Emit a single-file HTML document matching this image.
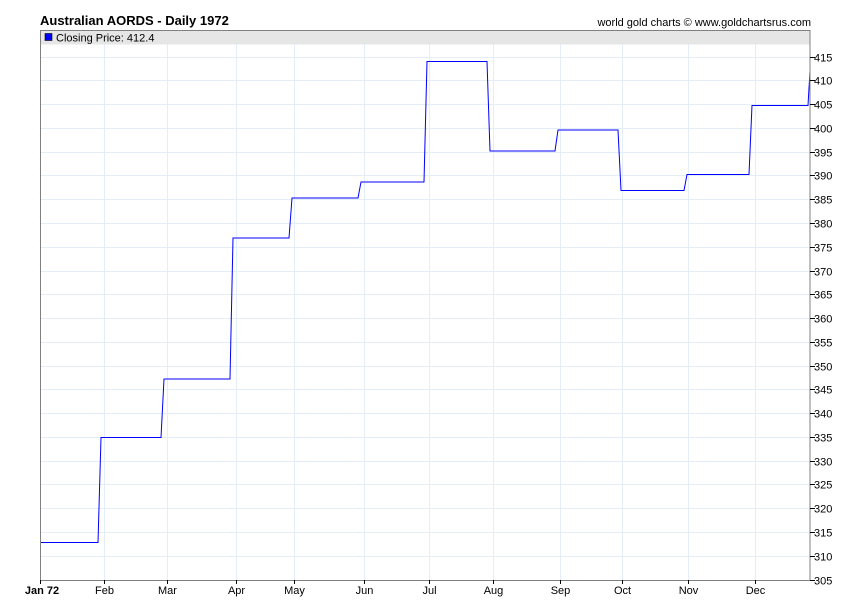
<!DOCTYPE html>
<html><head><meta charset="utf-8"><style>
html,body{margin:0;padding:0;background:#fff;}
svg{display:block;font-family:"Liberation Sans",Arial,sans-serif;}
</style></head><body>
<svg width="850" height="616" xmlns="http://www.w3.org/2000/svg">
<rect width="850" height="616" fill="#fff"/>
<text x="40" y="25" font-size="13" font-weight="bold" fill="#000">Australian AORDS - Daily 1972</text>
<text x="811" y="26" font-size="11" text-anchor="end" fill="#000">world gold charts © www.goldchartsrus.com</text>
<rect x="40.5" y="30.5" width="769.5" height="14" fill="#e6e6e6"/>
<g stroke="#e3eef8" stroke-width="1">
<line x1="40" x2="810" y1="556.5" y2="556.5"/><line x1="40" x2="810" y1="532.5" y2="532.5"/>
<line x1="40" x2="810" y1="508.5" y2="508.5"/><line x1="40" x2="810" y1="484.5" y2="484.5"/>
<line x1="40" x2="810" y1="461.5" y2="461.5"/><line x1="40" x2="810" y1="437.5" y2="437.5"/>
<line x1="40" x2="810" y1="413.5" y2="413.5"/><line x1="40" x2="810" y1="389.5" y2="389.5"/>
<line x1="40" x2="810" y1="366.5" y2="366.5"/><line x1="40" x2="810" y1="342.5" y2="342.5"/>
<line x1="40" x2="810" y1="318.5" y2="318.5"/><line x1="40" x2="810" y1="294.5" y2="294.5"/>
<line x1="40" x2="810" y1="271.5" y2="271.5"/><line x1="40" x2="810" y1="247.5" y2="247.5"/>
<line x1="40" x2="810" y1="223.5" y2="223.5"/><line x1="40" x2="810" y1="199.5" y2="199.5"/>
<line x1="40" x2="810" y1="175.5" y2="175.5"/><line x1="40" x2="810" y1="152.5" y2="152.5"/>
<line x1="40" x2="810" y1="128.5" y2="128.5"/><line x1="40" x2="810" y1="104.5" y2="104.5"/>
<line x1="40" x2="810" y1="80.5" y2="80.5"/><line x1="40" x2="810" y1="57.5" y2="57.5"/>
<line x1="104.5" x2="104.5" y1="30" y2="580"/><line x1="167.5" x2="167.5" y1="30" y2="580"/>
<line x1="236.5" x2="236.5" y1="30" y2="580"/><line x1="294.5" x2="294.5" y1="30" y2="580"/>
<line x1="364.5" x2="364.5" y1="30" y2="580"/><line x1="429.5" x2="429.5" y1="30" y2="580"/>
<line x1="493.5" x2="493.5" y1="30" y2="580"/><line x1="560.5" x2="560.5" y1="30" y2="580"/>
<line x1="622.5" x2="622.5" y1="30" y2="580"/><line x1="688.5" x2="688.5" y1="30" y2="580"/>
<line x1="755.5" x2="755.5" y1="30" y2="580"/>
</g>
<rect x="40.5" y="30.5" width="769.5" height="14" fill="#e6e6e6"/>
<rect x="45" y="33.5" width="7" height="7" fill="#0000ff" stroke="#000" stroke-width="0.6"/>
<text x="56" y="41.5" font-size="11" fill="#000">Closing Price: 412.4</text>
<polyline fill="none" stroke="#0000ff" stroke-width="1" points="40,542.5 98,542.5 101,437.5 161,437.5 164,379 230,379 233,238 289,238 292,198 358,198 361,182 424,182 427,61.5 487,61.5 490,151 555,151 558,130 618,130 621,190.5 684,190.5 687,174.5 749,174.5 752,105.5 808,105.5 810,71"/>
<rect x="40.5" y="30.5" width="769.5" height="550" fill="none" stroke="#808080" stroke-width="1"/>
<g stroke="#000" stroke-width="1">
<line x1="810" x2="815" y1="580.5" y2="580.5"/><line x1="810" x2="815" y1="556.5" y2="556.5"/>
<line x1="810" x2="815" y1="532.5" y2="532.5"/><line x1="810" x2="815" y1="508.5" y2="508.5"/>
<line x1="810" x2="815" y1="484.5" y2="484.5"/><line x1="810" x2="815" y1="461.5" y2="461.5"/>
<line x1="810" x2="815" y1="437.5" y2="437.5"/><line x1="810" x2="815" y1="413.5" y2="413.5"/>
<line x1="810" x2="815" y1="389.5" y2="389.5"/><line x1="810" x2="815" y1="366.5" y2="366.5"/>
<line x1="810" x2="815" y1="342.5" y2="342.5"/><line x1="810" x2="815" y1="318.5" y2="318.5"/>
<line x1="810" x2="815" y1="294.5" y2="294.5"/><line x1="810" x2="815" y1="271.5" y2="271.5"/>
<line x1="810" x2="815" y1="247.5" y2="247.5"/><line x1="810" x2="815" y1="223.5" y2="223.5"/>
<line x1="810" x2="815" y1="199.5" y2="199.5"/><line x1="810" x2="815" y1="175.5" y2="175.5"/>
<line x1="810" x2="815" y1="152.5" y2="152.5"/><line x1="810" x2="815" y1="128.5" y2="128.5"/>
<line x1="810" x2="815" y1="104.5" y2="104.5"/><line x1="810" x2="815" y1="80.5" y2="80.5"/>
<line x1="810" x2="815" y1="57.5" y2="57.5"/>
<line x1="40.5" x2="40.5" y1="580" y2="584"/><line x1="104.5" x2="104.5" y1="580" y2="584"/>
<line x1="167.5" x2="167.5" y1="580" y2="584"/><line x1="236.5" x2="236.5" y1="580" y2="584"/>
<line x1="294.5" x2="294.5" y1="580" y2="584"/><line x1="364.5" x2="364.5" y1="580" y2="584"/>
<line x1="429.5" x2="429.5" y1="580" y2="584"/><line x1="493.5" x2="493.5" y1="580" y2="584"/>
<line x1="560.5" x2="560.5" y1="580" y2="584"/><line x1="622.5" x2="622.5" y1="580" y2="584"/>
<line x1="688.5" x2="688.5" y1="580" y2="584"/><line x1="755.5" x2="755.5" y1="580" y2="584"/>
</g>
<g font-size="11" fill="#000">
<text x="814" y="584.5">305</text><text x="814" y="560.5">310</text><text x="814" y="536.5">315</text>
<text x="814" y="512.5">320</text><text x="814" y="488.5">325</text><text x="814" y="465.5">330</text>
<text x="814" y="441.5">335</text><text x="814" y="417.5">340</text><text x="814" y="393.5">345</text>
<text x="814" y="370.5">350</text><text x="814" y="346.5">355</text><text x="814" y="322.5">360</text>
<text x="814" y="298.5">365</text><text x="814" y="275.5">370</text><text x="814" y="251.5">375</text>
<text x="814" y="227.5">380</text><text x="814" y="203.5">385</text><text x="814" y="179.5">390</text>
<text x="814" y="156.5">395</text><text x="814" y="132.5">400</text><text x="814" y="108.5">405</text>
<text x="814" y="84.5">410</text><text x="814" y="61.5">415</text>
</g>
<g font-size="11" fill="#000" text-anchor="middle">
<text x="42" y="594" font-weight="bold">Jan 72</text>
<text x="104.5" y="594">Feb</text><text x="167.5" y="594">Mar</text><text x="236.5" y="594">Apr</text>
<text x="294.5" y="594">May</text><text x="364.5" y="594">Jun</text><text x="429.5" y="594">Jul</text>
<text x="493.5" y="594">Aug</text><text x="560.5" y="594">Sep</text><text x="622.5" y="594">Oct</text>
<text x="688.5" y="594">Nov</text><text x="755.5" y="594">Dec</text>
</g>
</svg>
</body></html>
